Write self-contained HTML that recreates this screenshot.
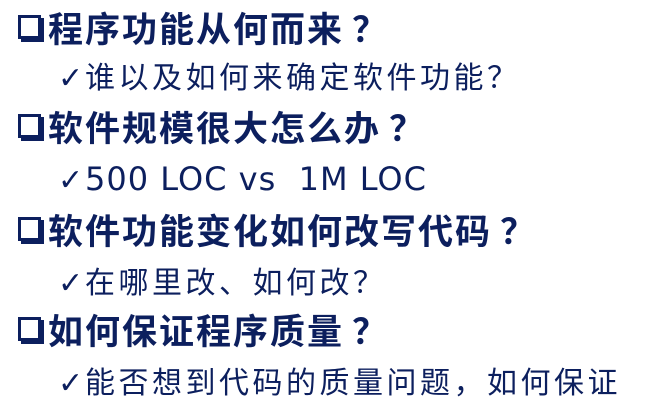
<!DOCTYPE html>
<html><head><meta charset="utf-8"><style>
html,body{margin:0;padding:0;background:#fff;width:657px;height:401px;overflow:hidden}
body{position:relative;color:#0c1f5e;font-family:"Noto Sans CJK SC",sans-serif}
.h{position:absolute;left:48px;font-weight:bold;font-size:35px;letter-spacing:2px;line-height:40px;white-space:nowrap}
.h i{font-style:normal;margin-left:8px}
.b{position:absolute;left:18px;width:17px;height:18px;border:3px solid #0c1f5e;box-shadow:3px 3px 0 #0c1f5e}
.s{position:absolute;left:58px;font-size:30px;letter-spacing:3.5px;line-height:36px;white-space:nowrap}
.c{font-family:"DejaVu Sans",sans-serif;font-size:30px;letter-spacing:0;display:inline-block;width:27px}
.lat{font-family:"DejaVu Sans",sans-serif;font-size:32px;letter-spacing:1px}
</style></head><body>
<div class="b" style="top:15px"></div><div class="h" style="top:8px">程序功能从何而来<i>？</i></div>
<div class="s" style="top:57px"><span class="c">✓</span>谁以及如何来确定软件功能？</div>
<div class="b" style="top:114px"></div><div class="h" style="top:107px">软件规模很大怎么办<i>？</i></div>
<div class="s" style="top:159px"><span class="c">✓</span><span class="lat">500 LOC vs &nbsp;1M LOC</span></div>
<div class="b" style="top:217px"></div><div class="h" style="top:210px">软件功能变化如何改写代码<i>？</i></div>
<div class="s" style="top:262px"><span class="c">✓</span>在哪里改、如何改？</div>
<div class="b" style="top:317px"></div><div class="h" style="top:310px">如何保证程序质量<i>？</i></div>
<div class="s" style="top:362px"><span class="c">✓</span>能否想到代码的质量问题，如何保证</div>
</body></html>
